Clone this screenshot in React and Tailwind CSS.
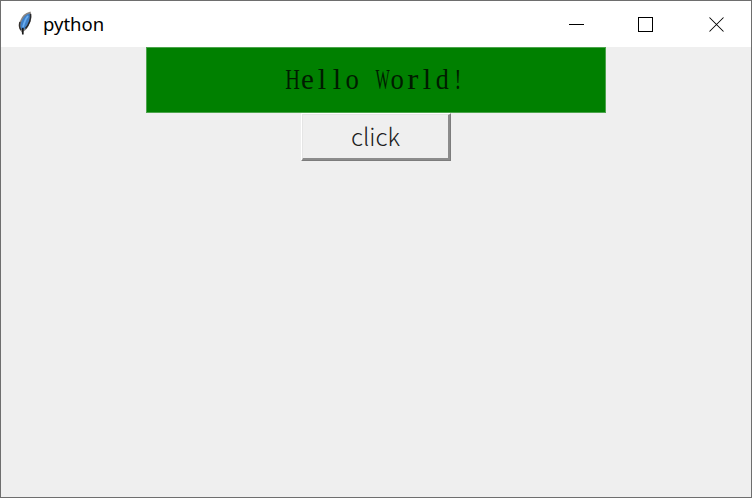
import React from "react";

function Feather() {
  return (
    <svg width="16" height="26" viewBox="0 0 16 26" className="shrink-0">
      <path d="M13 1.500 C14.500 5 13.500 10 11 14.500 C9.500 17.500 7.500 19.500 5 20.500 C2.500 18 2 14 3.800 10 C5.500 5.500 9 2.500 13 1.500Z" fill="#3f7fc6" stroke="#8a8580" strokeWidth="1.500" />
      <path d="M13.500 3 C14 8 12 13.500 8.500 17.500" fill="none" stroke="#26282c" strokeWidth="1.400" />
      <path d="M3 11 C2 14 2.500 17 4 19" fill="none" stroke="#34302d" strokeWidth="1.400" />
      <path d="M11 5 C8.500 8 7 12 6 16" fill="none" stroke="#6aaef0" strokeWidth="1.800" />
      <path d="M5.800 17 V23.500" fill="none" stroke="#191919" strokeWidth="1.700" />
    </svg>
  );
}

function WindowControls() {
  return (
    <svg width="156" height="16" viewBox="0 0 156 16" fill="none" stroke="#000" shapeRendering="crispEdges">
      <path d="M0 8.500H15" />
      <path d="M69.500 1.500H83.500V15.500H69.500Z" />
      <path d="M140.500 1.500L154.500 15.500M154.500 1.500L140.500 15.500" shapeRendering="auto" strokeWidth="1.050" />
    </svg>
  );
}

// Horizontal scale that fits each serif glyph to a fixed-pitch cell.
const glyphScale = { H: 0.7, e: 1, l: 1.05, o: 0.92, W: 0.52, r: 1.15, d: 0.9, "!": 0.7 };

function FixedPitch({ text }) {
  return (
    <span className="flex font-['Liberation_Serif',serif] text-[29px] leading-8">
      {text.split("").map((char, i) => (
        <span key={i} className="flex w-[15px] justify-center whitespace-pre">
          <span style={{ transform: `scaleX(${glyphScale[char] || 1})` }}>{char}</span>
        </span>
      ))}
    </span>
  );
}

export default function App() {
  return (
    <div className="flex h-[498px] w-[752px] flex-col overflow-hidden border border-[#6e6e6e] bg-[#efefef]">
      <header className="flex h-[46px] shrink-0 items-center bg-white pl-4 pr-[26px]">
        <Feather />
        <span className="ml-[10px] font-['Noto_Sans','Open_Sans',sans-serif] text-[18.5px] leading-6 text-black">python</span>
        <div className="ml-auto">
          <WindowControls />
        </div>
      </header>
      <main className="flex flex-col items-center">
        <div className="flex h-[66px] w-[460px] items-center justify-center border border-[#4ca44c] bg-[#008000] pb-[3px] pr-[2px] text-[#001c00]">
          <FixedPitch text="Hello World!" />
        </div>
        <button className="flex h-12 w-[150px] border-b border-l border-r border-t border-b-[#7c7c7c] border-l-white border-r-[#7c7c7c] border-t-white bg-[#efefef] text-[#202020]">
          <span className="flex h-full w-full items-center justify-center border-b-2 border-l border-r-2 border-t border-b-[#8c8c8c] border-l-[#e5e5e5] border-r-[#8c8c8c] border-t-[#e5e5e5] pb-0.5 font-['Noto_Sans_CJK_SC','Noto_Sans',sans-serif] text-[24px] font-light leading-8">
            click
          </span>
        </button>
      </main>
    </div>
  );
}
